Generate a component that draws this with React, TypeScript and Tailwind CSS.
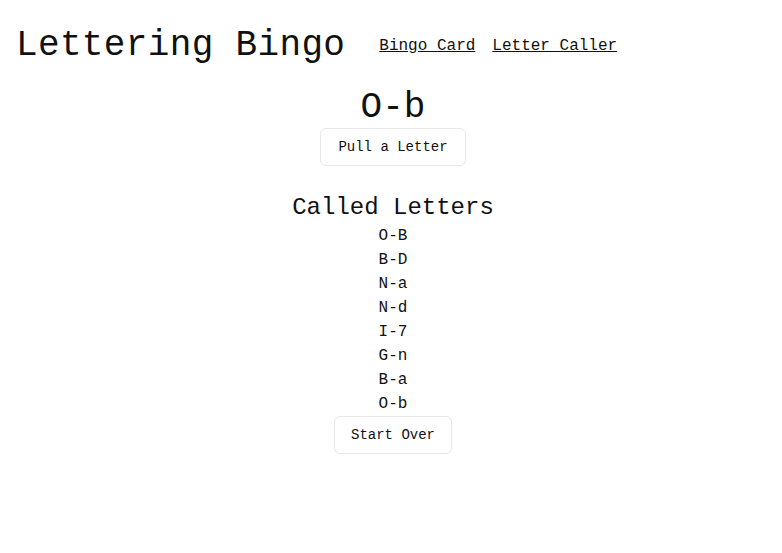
import React, { useState } from 'react';

const App: React.FC = () => {
  const [current] = useState('O-b');
  const called = ['O-B', 'B-D', 'N-a', 'N-d', 'I-7', 'G-n', 'B-a', 'O-b'];

  return (
    <div className="min-h-screen bg-white text-[#111] font-['Liberation_Mono',monospace]">
      <header className="flex items-center gap-[34px] px-4 pt-[26px]">
        <h1 className="text-4xl leading-10 tracking-[0.35px]">Lettering Bingo</h1>
        <nav className="flex gap-[17px] text-base">
          <a href="#" className="underline">Bingo Card</a>
          <a href="#" className="underline">Letter Caller</a>
        </nav>
      </header>

      <main className="flex flex-col items-center pl-1">
        <div className="mt-[22px] text-4xl leading-10">{current}</div>
        <button className="h-[38px] px-[17px] text-sm border border-[#e5e7eb] rounded-md">
          Pull a Letter
        </button>

        <h2 className="mt-[26px] text-2xl leading-8">Called Letters</h2>
        <ul className="flex flex-col items-center">
          {called.map((l, i) => (
            <li key={i} className="text-base leading-6">{l}</li>
          ))}
        </ul>
        <button className="h-[38px] px-[16px] text-sm border border-[#e5e7eb] rounded-md">
          Start Over
        </button>
      </main>
    </div>
  );
};

export default App;
